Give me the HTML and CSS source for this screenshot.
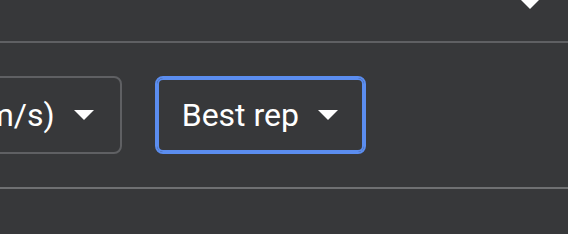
FILE: index.html
```html
<!DOCTYPE html>
<html lang="en">
<head>
  <meta charset="UTF-8" />
  <title>Rep settings</title>
  <link rel="stylesheet" href="styles.css">
</head>
<body>

  <div class="field top-field">
    <span class="label">Exercise</span>
    <svg class="arrow" width="20" height="10" viewBox="0 0 20 10"><polygon points="0,0 20,0 10,10" fill="#fff"/></svg>
  </div>

  <div class="row">
    <div class="field select">
      <span class="label">Mean velocity (m/s)</span>
      <svg class="arrow" width="20" height="10" viewBox="0 0 20 10"><polygon points="0,0 20,0 10,10" fill="#fff"/></svg>
    </div>
    <div class="field select focused">
      <span class="label">Best rep</span>
      <svg class="arrow" width="20" height="10" viewBox="0 0 20 10"><polygon points="0,0 20,0 10,10" fill="#fff"/></svg>
    </div>
  </div>

  <div class="divider"></div>

</body>
</html>
```

FILE: styles.css
```css
html, body {
  margin: 0;
  padding: 0;
  overflow: hidden;
  height: 100%;
}

body {
  background: #37383a;
  color: #fff;
  font-family: Roboto, "Noto Sans", Arial, sans-serif;
  font-size: 32px;
}

.field {
  box-sizing: border-box;
  height: 78px;
  display: flex;
  align-items: center;
  gap: 19px;
  padding: 0 26px 0 25px;
  border: 2px solid #5f6063;
  border-radius: 8px;
  white-space: nowrap;
}

.top-field {
  margin: -35px -7px 0 -10px;
  padding-right: 33px;
  justify-content: flex-end;
}

.top-field .label {
  visibility: hidden;
}

.row {
  width: 366px;
  display: flex;
  justify-content: flex-end;
  gap: 33px;
  margin-top: 33px;
}

.select {
  flex-shrink: 0;
}

.focused {
  border-color: #5b8def;
  box-shadow: inset 0 0 0 2px #5b8def;
}

.arrow {
  flex-shrink: 0;
  display: block;
}

.divider {
  height: 2px;
  background: #6f7072;
  margin-top: 33px;
}
```
